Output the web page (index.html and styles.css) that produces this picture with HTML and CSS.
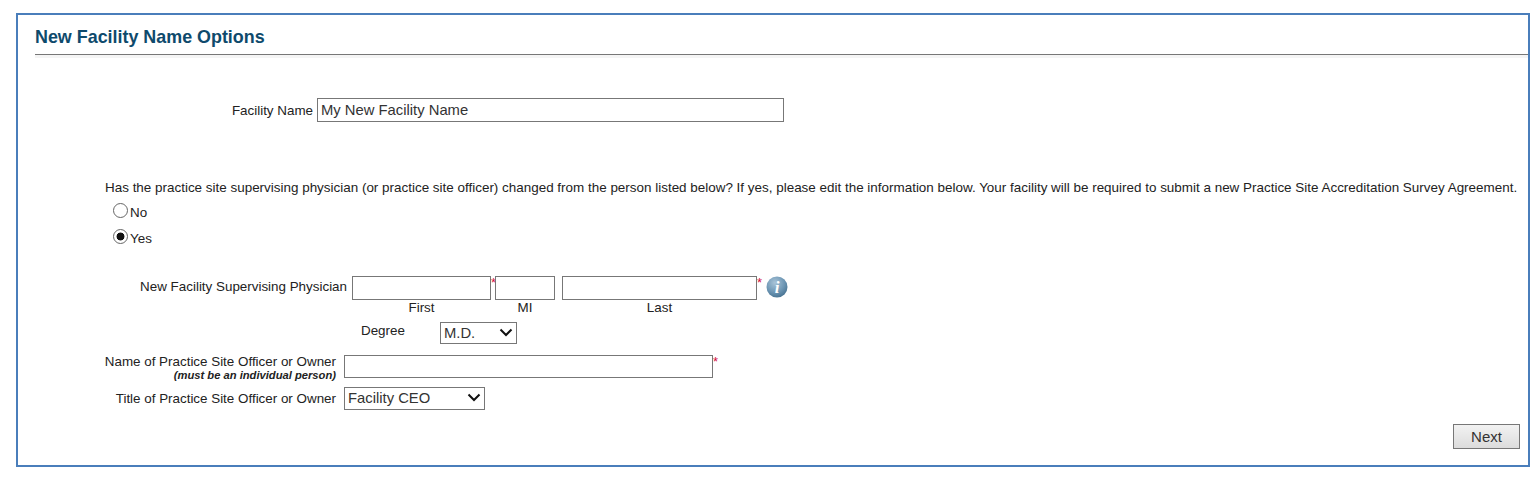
FILE: index.html
```html
<!DOCTYPE html>
<html lang="en">
<head>
  <meta charset="UTF-8">
  <title>New Facility Name Options</title>
  <link rel="stylesheet" href="styles.css">
</head>
<body>
  <div class="panel">
    <h2 class="panel-title">New Facility Name Options</h2>
    <div class="rule"></div>

    <div class="name-row">
      <label class="name-label">Facility Name</label>
      <input class="field name-field" type="text" value="My New Facility Name">
    </div>

    <p class="question">Has the practice site supervising physician (or practice site officer) changed from the person listed below? If yes, please edit the information below. Your facility will be required to submit a new Practice Site Accreditation Survey Agreement.</p>
    <div class="radio-row">
      <input class="radio" type="radio" name="changed">
      <span>No</span>
    </div>
    <div class="radio-row">
      <input class="radio" type="radio" name="changed" checked>
      <span>Yes</span>
    </div>

    <div class="physician-row">
      <label class="physician-label">New Facility Supervising Physician</label>
      <div class="part part-first">
        <input class="field" type="text">
        <span class="caption">First</span>
      </div>
      <span class="req">*</span>
      <div class="part part-mi">
        <input class="field" type="text">
        <span class="caption">MI</span>
      </div>
      <div class="part part-last">
        <input class="field" type="text">
        <span class="caption">Last</span>
      </div>
      <span class="req">*</span>
      <svg class="info" width="22" height="22" viewBox="0 0 22 22">
        <defs>
          <radialGradient id="infoFill" cx="40%" cy="30%" r="75%">
            <stop offset="0" stop-color="#a9c4d8"/>
            <stop offset="0.6" stop-color="#6d96b4"/>
            <stop offset="1" stop-color="#44708f"/>
          </radialGradient>
        </defs>
        <circle cx="11" cy="11" r="10.5" fill="url(#infoFill)"/>
        <text class="info-i" x="11" y="17" text-anchor="middle">i</text>
      </svg>
    </div>

    <div class="degree-row">
      <label class="degree-label">Degree</label>
      <div class="select-wrap degree-select">
        <select class="select"><option>M.D.</option></select>
        <svg class="chevron" width="14" height="9" viewBox="0 0 14 9"><path d="M1.5 1.5 7 7l5.5-5.5" fill="none" stroke="#111" stroke-width="2"/></svg>
      </div>
    </div>

    <div class="officer-row">
      <div class="officer-label">
        <label>Name of Practice Site Officer or Owner</label>
        <em class="note">(must be an individual person)</em>
      </div>
      <input class="field officer-field" type="text">
      <span class="req">*</span>
    </div>

    <div class="title-row">
      <label class="officer-label">Title of Practice Site Officer or Owner</label>
      <div class="select-wrap title-select">
        <select class="select"><option>Facility CEO</option></select>
        <svg class="chevron" width="14" height="9" viewBox="0 0 14 9"><path d="M1.5 1.5 7 7l5.5-5.5" fill="none" stroke="#111" stroke-width="2"/></svg>
      </div>
    </div>

    <div class="actions">
      <button class="btn" type="button">Next</button>
    </div>
  </div>
</body>
</html>
```

FILE: styles.css
```css
html, body {
  background: #fff;
}
body {
  margin: 0;
  font-family: "Liberation Sans", Arial, sans-serif;
  font-size: 13.4px;
  color: #222;
  overflow: hidden;
}
.panel {
  box-sizing: border-box;
  width: 1514px;
  height: 454px;
  margin: 13px 0 0 16px;
  border: 2px solid #4a7ebb;
  padding-left: 17px;
}
.panel-title {
  margin: 13px 0 0 0;
  height: 26px;
  font-size: 17.9px;
  line-height: 18px;
  font-weight: bold;
  color: #0e4a6c;
}
.rule {
  height: 3px;
  border-top: 1px solid #777;
  background: #f5f5f5;
}
.field {
  box-sizing: border-box;
  display: block;
  width: 100%;
  height: 24px;
  margin: 0;
  padding: 0 3px;
  border: 1px solid #777;
  border-radius: 0;
  background: #fff;
  font-family: "Liberation Sans", Arial, sans-serif;
  font-size: 14.8px;
  color: #333;
  outline: none;
}
.req {
  align-self: flex-start;
  width: 4px;
  color: #d3103c;
  font-size: 13px;
  line-height: 14px;
}
.name-row {
  display: flex;
  align-items: center;
  margin-top: 40px;
}
.name-label {
  width: 278px;
  margin-right: 4px;
  text-align: right;
}
.name-field {
  width: 467px;
}
.question {
  margin: 59px 0 0 70px;
  font-size: 13.45px;
  white-space: nowrap;
  line-height: 14px;
}
.radio-row {
  display: flex;
  align-items: center;
  height: 15px;
  margin: 8px 0 0 78px;
}
.radio-row + .radio-row {
  margin-top: 11px;
}
.radio-row span {
  position: relative;
  top: 2px;
}
.radio {
  appearance: none;
  box-sizing: border-box;
  width: 15px;
  height: 15px;
  margin: 0 2px 0 0;
  border: 1px solid #666;
  border-radius: 50%;
  background: #fff;
}
.radio:checked {
  background: radial-gradient(circle, #111 0 3.6px, #fff 4.3px);
}
.physician-row {
  display: flex;
  align-items: flex-start;
  margin-top: 32px;
}
.physician-label {
  width: 312px;
  margin-right: 5px;
  line-height: 21px;
  text-align: right;
}
.part {
  display: flex;
  flex-direction: column;
}
.part-first {
  width: 139px;
}
.part-mi {
  width: 60px;
}
.part-last {
  width: 195px;
  margin-left: 7px;
}
.caption {
  line-height: 15px;
  text-align: center;
}
.info {
  margin: 0 0 0 5px;
}
.info-i {
  font-family: "Liberation Serif", serif;
  font-size: 17px;
  font-style: italic;
  font-weight: bold;
  fill: #fff;
}
.degree-row {
  display: flex;
  align-items: flex-start;
  margin-top: 7px;
}
.degree-label {
  width: 79px;
  margin-left: 326px;
  line-height: 17px;
}
.select-wrap {
  position: relative;
  box-sizing: border-box;
}
.select {
  appearance: none;
  box-sizing: border-box;
  display: block;
  width: 100%;
  height: 100%;
  margin: 0;
  padding: 0 2px 1px 3px;
  border: 1px solid #777;
  border-radius: 0;
  background: #fff;
  font-family: "Liberation Sans", Arial, sans-serif;
  font-size: 14.8px;
  color: #333;
}
.chevron {
  position: absolute;
  right: 4px;
  top: 6px;
}
.degree-select {
  width: 77px;
  height: 22px;
}
.title-select {
  width: 141px;
  height: 23px;
}
.officer-row {
  display: flex;
  align-items: flex-start;
  margin-top: 11px;
}
.officer-label {
  box-sizing: border-box;
  width: 301px;
  margin-right: 8px;
  line-height: 14px;
  text-align: right;
}
.officer-label label {
  display: block;
}
.note {
  display: block;
  font-size: 11.2px;
  line-height: 13px;
  font-weight: bold;
}
.officer-field {
  width: 369px;
  height: 23px;
}
.title-row {
  display: flex;
  align-items: center;
  margin-top: 5px;
}
.actions {
  display: flex;
  justify-content: flex-end;
  margin: 14px 8px 0 0;
}
.btn {
  box-sizing: border-box;
  width: 67px;
  height: 25px;
  padding: 0;
  border: 1px solid #777;
  border-radius: 0;
  background: linear-gradient(#f2f2f2, #dcdcdc);
  font-family: "Liberation Sans", Arial, sans-serif;
  font-size: 15px;
  color: #333;
}
```
